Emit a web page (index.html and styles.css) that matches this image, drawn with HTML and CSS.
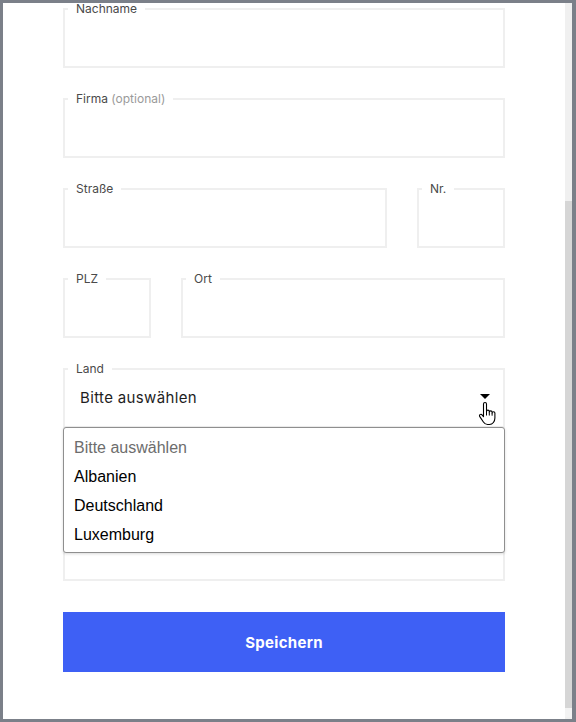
FILE: index.html
```html
<!DOCTYPE html>
<html lang="de">
<head>
  <meta charset="UTF-8" />
  <meta name="viewport" content="width=device-width, initial-scale=1.0" />
  <title>Adresse bearbeiten</title>
  <link rel="stylesheet" href="styles.css">
</head>
<body>
  <div class="modal">
    <div class="modal-body">
      <form class="address-form">
        <fieldset class="field">
          <legend>Nachname</legend>
          <input type="text">
        </fieldset>

        <fieldset class="field">
          <legend>Firma <span class="optional">(optional)</span></legend>
          <input type="text">
        </fieldset>

        <div class="row row-street">
          <fieldset class="field">
            <legend>Straße</legend>
            <input type="text">
          </fieldset>
          <fieldset class="field">
            <legend>Nr.</legend>
            <input type="text">
          </fieldset>
        </div>

        <div class="row row-city">
          <fieldset class="field">
            <legend>PLZ</legend>
            <input type="text">
          </fieldset>
          <fieldset class="field">
            <legend>Ort</legend>
            <input type="text">
          </fieldset>
        </div>

        <div class="select-wrap">
          <fieldset class="field">
            <legend>Land</legend>
            <div class="select-value">
              <span>Bitte auswählen</span>
              <span class="caret"></span>
            </div>
          </fieldset>

          <ul class="dropdown">
            <li class="placeholder">Bitte auswählen</li>
            <li>Albanien</li>
            <li>Deutschland</li>
            <li>Luxemburg</li>
          </ul>

          <svg class="cursor" width="19" height="25" viewBox="0 0 19 25">
            <path d="M5.5 3a1.5 1.5 0 0 1 3 0v7.5a1.4 1.4 0 0 1 2.8 0v.8a1.4 1.4 0 0 1 2.8 0v.8a1.4 1.4 0 0 1 2.8 0V17c0 3.3-2.2 6.5-5.4 6.5H9.6c-2 0-3.2-1-4.2-2.5L1.8 15.6a1.4 1.4 0 0 1 2.2-1.8l1.5 1.9Z" fill="#fff" stroke="#000" stroke-width="1.1" stroke-linejoin="round"/>
            <path d="M8.5 10.5v4M11.3 11.3v3.2M14.1 12.1v2.6" stroke="#000" stroke-width="1" fill="none"/>
          </svg>
        </div>

        <div class="field-box">
          <input type="text">
        </div>

        <button type="button" class="save-btn">Speichern</button>
      </form>
    </div>

    <div class="scrollbar">
      <div class="thumb"></div>
      <div class="arrow"></div>
    </div>
  </div>
</body>
</html>
```

FILE: styles.css
```css
* {
  margin: 0;
  padding: 0;
  box-sizing: border-box;
}

body {
  background-color: #7b8089;
  padding: 3px 4px 3px 3px;
  font-family: 'Inter', sans-serif;
}

.modal {
  display: flex;
  height: 716px;
  background-color: #fff;
  overflow: hidden;
}

.modal-body {
  flex: 1;
  padding: 0 60px;
  overflow: hidden;
}

.address-form {
  display: flex;
  flex-direction: column;
  gap: 25px;
}

.field {
  border: 2px solid #efefef;
  padding: 0 0 0 3px;
  margin: 0;
  min-width: 0;
}

.field legend {
  padding: 0 8px;
  font-size: 12px;
  line-height: 12px;
  color: #4a4a4a;
}

.field .optional {
  color: #9a9a9a;
}

.field input,
.field-box input {
  display: block;
  width: 100%;
  height: 51px;
  border: none;
  outline: none;
  background: transparent;
}

.field-box {
  margin-top: 5px;
  border: 2px solid #efefef;
}

.field-box input {
  height: 119px;
}

.row {
  display: grid;
  gap: 30px;
}

.row-street {
  grid-template-columns: 1fr 88px;
}

.row-city {
  grid-template-columns: 88px 1fr;
}

.select-wrap {
  position: relative;
}

.select-value {
  height: 51px;
  display: flex;
  align-items: center;
  justify-content: space-between;
  padding: 0 13px 6px 12px;
  font-size: 15px;
  letter-spacing: 0.35px;
  color: #1e1e1e;
}

.caret {
  width: 0;
  height: 0;
  border-left: 5px solid transparent;
  border-right: 5px solid transparent;
  border-top: 5px solid #000;
  margin-top: -3px;
}

.dropdown {
  position: absolute;
  top: calc(100% - 1px);
  left: 0;
  right: 0;
  list-style: none;
  background-color: #fff;
  border: 1px solid #8f8f8f;
  border-radius: 3px;
  padding: 5px 0 3px;
  box-shadow: 0 1px 3px rgba(0, 0, 0, 0.15);
  font-family: 'Liberation Sans', Arial, sans-serif;
  font-size: 16px;
  z-index: 2;
}

.dropdown li {
  line-height: 29px;
  padding: 0 10px;
  color: #000;
}

.dropdown .placeholder {
  color: #6d6d6d;
}

.cursor {
  position: absolute;
  top: 38px;
  right: 8px;
  z-index: 3;
}

.save-btn {
  margin-top: 6px;
  height: 60px;
  border: none;
  background-color: #3e60f5;
  color: #fff;
  font-family: 'Inter', sans-serif;
  font-weight: 700;
  font-size: 15px;
  letter-spacing: 0.3px;
}

.scrollbar {
  width: 7px;
  background-color: #f0f0f0;
  display: flex;
  flex-direction: column;
  justify-content: flex-end;
  padding-bottom: 2px;
}

.thumb {
  height: 507px;
  background-color: #d6d6d6;
}

.arrow {
  height: 9px;
  background-color: #f3f3f3;
}
```
